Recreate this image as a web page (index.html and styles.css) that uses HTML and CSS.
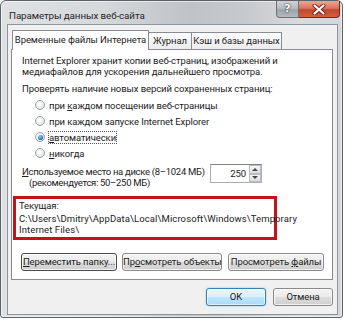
FILE: index.html
```html
<!DOCTYPE html>
<html lang="ru">
<head>
<meta charset="utf-8">
<title>Параметры данных веб-сайта</title>
<link rel="stylesheet" href="styles.css">
</head>
<body>
<div class="window">
  <div class="titlebar">
    <span class="title">Параметры данных веб-сайта</span>
    <div class="caption">
      <div class="cap-help">?</div>
      <div class="cap-close">
        <svg width="14" height="11" viewBox="0 0 14 11"><path d="M2.5 1.5 L11.5 9.5 M11.5 1.5 L2.5 9.5" stroke="#6b2418" stroke-width="4" stroke-linecap="round"/><path d="M2.5 1.5 L11.5 9.5 M11.5 1.5 L2.5 9.5" stroke="#fff" stroke-width="2.2" stroke-linecap="round"/></svg>
      </div>
    </div>
  </div>
  <div class="client">
    <div class="tabs">
      <div class="tab tab-active tab-files">Временные файлы Интернета</div>
      <div class="tab tab-journal">Журнал</div>
      <div class="tab tab-cache">Кэш и базы данных</div>
    </div>
    <div class="panel">
      <p class="intro">Internet Explorer хранит копии веб-страниц, изображений и<br>медиафайлов для ускорения дальнейшего просмотра.</p>
      <p class="check">Проверять наличие новых версий сохраненных страниц:</p>
      <div class="radios">
        <div class="radio"><span class="dot"></span><span>при <u>к</u>аждом посещении веб-страницы</span></div>
        <div class="radio"><span class="dot"></span><span>при каждом запуске Internet Explorer</span></div>
        <div class="radio"><span class="dot dot-on"></span><span class="focus"><u>а</u>втоматически</span></div>
        <div class="radio"><span class="dot"></span><span><u>н</u>икогда</span></div>
      </div>
      <div class="disk">
        <div class="disk-label"><u>И</u>спользуемое место на диске (8–1024 МБ)<br><span class="rec">(рекомендуется: 50–250 МБ)</span></div>
        <div class="spin">
          <span class="spin-val">250</span>
          <span class="spin-btns"><span class="spin-btn"><span class="arr-up"></span></span><span class="spin-btn"><span class="arr-down"></span></span></span>
        </div>
      </div>
      <div class="current">
        <div class="cur-label">Текущая:</div>
        <div class="cur-path">C:\Users\Dmitry\AppData\Local\Microsoft\Windows\Temporary<br>Internet Files\</div>
      </div>
      <div class="panel-buttons">
        <div class="btn btn-move btn-focus"><u>П</u>ереместить папку...</div>
        <div class="btn btn-objects">Пр<u>о</u>смотреть объекты</div>
        <div class="btn btn-files">Просмотреть <u>ф</u>айлы</div>
      </div>
    </div>
    <div class="dlg-buttons">
      <div class="btn btn-dlg btn-default">OK</div>
      <div class="btn btn-dlg">Отмена</div>
    </div>
  </div>
</div>
</body>
</html>
```
FILE: styles.css
```css
* { box-sizing: border-box; }
body {
  margin: 0;
  background: #fff;
  font-family: Roboto, "Noto Sans", sans-serif;
  font-size: 9.5px;
  letter-spacing: -0.1px;
  color: #222;
}
p { margin: 0; }
u { text-decoration-thickness: 1px; text-underline-offset: 1px; }

.window {
  width: 343px;
  height: 318px;
  border: 1px solid #5d6268;
  border-radius: 6px 6px 3px 3px;
  background: linear-gradient(90deg, #dfe2e5 0%, #d6d9dc 30%, #bfc2c6 55%, #c6c9cd 72%, #d9dbde 88%, #d3d6da 100%);
  padding: 0 4px 2px 6px;
  display: flex;
  flex-direction: column;
  box-shadow: inset 0 0 0 1px rgba(255,255,255,0.55);
}
.titlebar {
  height: 23px;
  display: flex;
  align-items: flex-start;
  justify-content: space-between;
}
.title {
  margin: 8px 0 0 2px;
  font-size: 9.8px;
  line-height: 13px;
  color: #262626;
}
.caption {
  display: flex;
  margin-right: -2px;
}
.cap-help {
  width: 23px;
  height: 17px;
  border: 1px solid #6d7177;
  border-top: none;
  border-radius: 0 0 0 4px;
  background: linear-gradient(#cfd3d8 0%, #b9bdc3 45%, #9ea3aa 55%, #b4b8bf 100%);
  color: #fff;
  font: bold 11px/16px "DejaVu Sans", sans-serif;
  text-align: center;
  text-shadow: 0 0 2px #333, 0 0 1px #333;
}
.cap-close {
  width: 41px;
  height: 17px;
  border: 1px solid #6e2b20;
  border-left: none;
  border-top: none;
  border-radius: 0 0 4px 0;
  background: linear-gradient(#eaa894 0%, #d8775e 45%, #c4452b 55%, #d2603f 100%);
  display: flex;
  align-items: center;
  justify-content: center;
}
.client {
  flex: 1;
  border: 1px solid #8d959f;
  background: #f0f0f0;
  display: flex;
  flex-direction: column;
}
.tabs {
  display: flex;
  align-items: flex-end;
  height: 20px;
  margin: 5px 0 -1px 4px;
  position: relative;
  z-index: 1;
}
.tab {
  height: 17px;
  margin-bottom: 1px;
  border: 1px solid #898c95;
  border-bottom: none;
  background: linear-gradient(#fdfdfd, #ececec);
  line-height: 15px;
  text-align: center;
  white-space: nowrap;
  overflow: hidden;
}
.tab-active {
  height: 20px;
  margin-bottom: 0;
  background: #fff;
  line-height: 18px;
}
.tab-files { width: 137px; }
.tab-journal { width: 44px; margin-left: -1px; }
.tab-cache { width: 91px; margin-left: -1px; }

.panel {
  width: 322px;
  height: 231px;
  margin-left: 3px;
  border: 1px solid #898c95;
  background: #fff;
  padding: 5px 0 0 10px;
}
.intro { line-height: 11px; }
.check { line-height: 11px; margin-top: 6px; }
.radios { margin: 3px 0 0 13px; }
.radio {
  height: 16px;
  display: flex;
  align-items: center;
  gap: 4px;
}
.dot {
  width: 10px;
  height: 10px;
  border-radius: 50%;
  border: 1px solid #9a9da2;
  background: radial-gradient(circle at 40% 35%, #ffffff 0%, #eceded 55%, #d3d5d8 100%);
  display: flex;
  align-items: center;
  justify-content: center;
}
.dot-on::after {
  content: "";
  width: 5px;
  height: 5px;
  border-radius: 50%;
  background: radial-gradient(circle at 40% 35%, #9bd3f7 0%, #2e7cc0 55%, #1b4f86 100%);
}
.focus { outline: 1px dotted #555; outline-offset: 0; }

.disk {
  display: flex;
  align-items: flex-start;
  margin-top: 5px;
}
.disk-label {
  flex: none;
  width: 188px;
  min-width: 0;
  line-height: 11px;
  white-space: nowrap;
  letter-spacing: -0.3px;
}
.rec { padding-left: 7px; }
.spin {
  flex: none;
  width: 52px;
  height: 19px;
  margin-top: -2px;
  border: 1px solid #abadb3;
  border-top-color: #7f8288;
  background: #fff;
  display: flex;
  align-items: center;
  justify-content: flex-end;
}
.spin-val { margin-right: 3px; }
.spin-btns {
  width: 12px;
  height: 17px;
  display: flex;
  flex-direction: column;
}
.spin-btn {
  flex: 1;
  border: 1px solid #b8bbc0;
  background: linear-gradient(#f6f6f6, #dcdcdc);
  display: flex;
  align-items: center;
  justify-content: center;
}
.arr-up, .arr-down {
  width: 0;
  height: 0;
  border-left: 3px solid transparent;
  border-right: 3px solid transparent;
}
.arr-up { border-bottom: 3px solid #444; }
.arr-down { border-top: 3px solid #444; }

.current {
  width: 264px;
  margin: 8px 0 0 -9px;
  border: 3px solid #c3121f;
  padding: 1px 3px 2px 3px;
}
.cur-label { line-height: 11px; }
.cur-path { line-height: 10.5px; margin-top: 3px; white-space: nowrap; letter-spacing: 0.1px; }

.panel-buttons {
  display: flex;
  margin: 13px 0 0 -1px;
}
.btn {
  height: 18px;
  border: 1px solid #8a8a8a;
  border-radius: 3px;
  background: linear-gradient(#f3f3f3 0%, #ebebeb 48%, #dddddd 52%, #cfcfcf 100%);
  box-shadow: inset 0 0 0 1px rgba(255,255,255,0.7);
  line-height: 16px;
  text-align: center;
  white-space: nowrap;
}
.btn-move { width: 96px; }
.btn-objects { width: 100px; margin-left: 5px; }
.btn-files { width: 96px; margin-left: 6px; }
.btn-focus { border-color: #4a4a4a; }

.dlg-buttons {
  display: flex;
  justify-content: flex-end;
  gap: 7px;
  margin: 8px 4px 0 0;
}
.btn-dlg { width: 60px; }
.btn-default {
  border-color: #3c7fb1;
  background: linear-gradient(#eaf6fd 0%, #d9f0fc 48%, #bee6fd 52%, #a7d9f5 100%);
  box-shadow: inset 0 0 0 1px rgba(255,255,255,0.6), 0 0 2px #7fc3ea;
}
```
